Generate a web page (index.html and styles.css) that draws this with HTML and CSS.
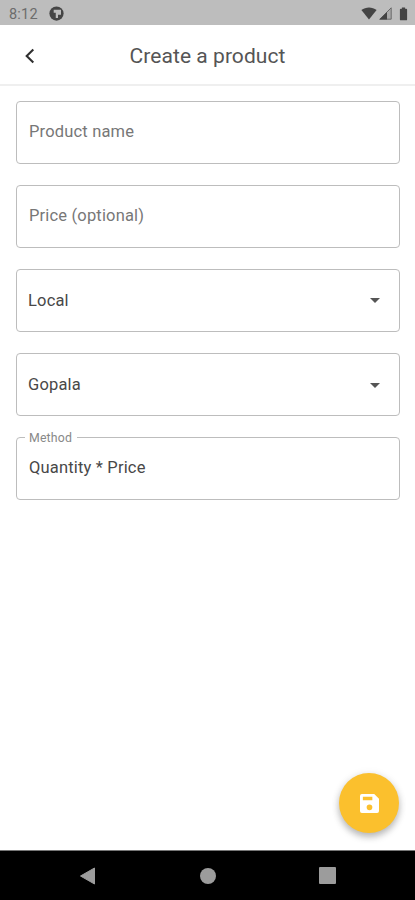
FILE: index.html
```html
<!DOCTYPE html>
<html lang="en">
<head>
<meta charset="utf-8">
<title>Create a product</title>
<link rel="stylesheet" href="styles.css">
</head>
<body>
<div class="screen">
  <header class="status">
    <span class="clock">8:12</span>
    <svg class="app-mark" viewBox="0 0 16 16"><circle cx="8" cy="8" r="7.6" fill="#454545"/><path d="M5 4h7.8v5.4H9.6v3.4H7.2V7.2H5z" fill="#bdbdbd"/></svg>
    <span class="spacer"></span>
    <svg class="wifi" viewBox="0 0 16 13"><path d="M.4 3C4.8-.5 11.2-.5 15.6 3L8 12.6z" fill="#444"/></svg>
    <svg class="signal" viewBox="0 0 13 13"><path d="M12.2.8v11.4H.8z" fill="#aaa" stroke="#555" stroke-width=".8"/><path d="M8 5v7.5H.3z" fill="#444"/></svg>
    <svg class="battery" viewBox="0 0 8 14"><path d="M2.4.5h3.2v1.2h1.1q.9 0 .9.9v9.8q0 .9-.9.9H1.3q-.9 0-.9-.9V2.6q0-.9.9-.9h1.1z" fill="#444"/></svg>
  </header>
  <nav class="appbar">
    <svg class="back" viewBox="0 0 12 16"><path d="M9.3 1.5 2.7 8l6.6 6.5" fill="none" stroke="#303030" stroke-width="2.1"/></svg>
    <h1 class="title">Create a product</h1>
  </nav>
  <main class="form">
    <div class="field hint">Product name</div>
    <div class="field hint">Price (optional)</div>
    <div class="field select"><span>Local</span><svg class="caret" viewBox="0 0 10 5"><path d="M0 0h10L5 5z" fill="#555"/></svg></div>
    <div class="field select"><span>Gopala</span><svg class="caret" viewBox="0 0 10 5"><path d="M0 0h10L5 5z" fill="#555"/></svg></div>
    <div class="field value"><span class="label">Method</span><span>Quantity * Price</span></div>
  </main>
  <button class="fab" aria-label="Save"><svg viewBox="0 0 20 20"><path fill="#fff" fill-rule="evenodd" d="M2 0h13l5 5v13q0 2-2 2H2q-2 0-2-2V2q0-2 2-2zM3 3v3.7h10V3zM10 11a3 3 0 1 0 0 6 3 3 0 0 0 0-6z"/></svg></button>
  <footer class="navbar">
    <svg class="nav-back" viewBox="0 0 16 18"><path d="M15 1v16L1 9z" fill="#9c9c9c" stroke="#9c9c9c" stroke-linejoin="round"/></svg>
    <span class="nav-home"></span>
    <span class="nav-recent"></span>
  </footer>
</div>
</body>
</html>
```
FILE: styles.css
```css
* { box-sizing: border-box; }
body { margin: 0; font-family: Roboto, sans-serif; background: #fff; }
svg { display: block; flex: none; }
.screen { position: relative; width: 415px; height: 900px; display: flex; flex-direction: column; overflow: hidden; }
.status { height: 25px; flex: none; background: #bdbdbd; display: flex; align-items: center; padding: 2px 7px 0 9px; color: #6c6c6c; }
.clock { font-size: 14.5px; line-height: 20px; letter-spacing: .2px; width: 40px; padding-top: 2px; }
.app-mark { width: 15px; height: 15px; }
.spacer { flex: 1; }
.wifi { width: 16px; height: 13px; margin-right: 2px; }
.signal { width: 13px; height: 13px; margin-right: 7px; }
.battery { width: 9px; height: 14px; }
.appbar { height: 61px; flex: none; border-bottom: 2px solid #efefef; display: flex; align-items: center; padding: 2px 24px 0; }
.back { width: 12px; height: 16px; }
.title { margin: 0 12px 0 0; flex: 1; text-align: center; font-size: 21px; line-height: 28px; font-weight: 400; letter-spacing: .05px; color: #555; }
.form { flex: 1; padding: 14.5px 15.5px 0 16px; display: flex; flex-direction: column; gap: 21px; }
.field { height: 63.2px; flex: none; position: relative; border: 1.5px solid #bdbdbd; border-radius: 4px; display: flex; align-items: center; padding: 0 19px 0 12px; font-size: 16.5px; line-height: 22px; letter-spacing: .17px; color: #484848; }
.hint { color: #777; }
.select { padding-left: 11px; justify-content: space-between; padding-top: 1px; }
.value { padding-bottom: 1px; }
.caret { width: 10px; height: 5px; }
.label { position: absolute; left: 8px; top: -7px; padding: 0 5px 0 4px; background: #fff; font-size: 12.3px; line-height: 14px; color: #888; }
.fab { position: absolute; left: 339px; top: 773px; width: 60px; height: 60px; border: 0; border-radius: 50%; padding: 0; background: #fbc02d; display: flex; align-items: center; justify-content: center; box-shadow: 0 4px 7px rgba(0,0,0,.25), 0 1px 10px rgba(0,0,0,.08); }
.fab svg { width: 19px; height: 19px; }
.navbar { height: 50px; flex: none; background: #000; border-top: 1px solid #777; display: flex; align-items: center; padding: 0 79px; justify-content: space-between; }
.nav-back { width: 17px; height: 18px; }
.nav-home { width: 16px; height: 16px; border-radius: 50%; background: #9c9c9c; }
.nav-recent { width: 17px; height: 17px; border-radius: 1px; background: #9c9c9c; }
```
